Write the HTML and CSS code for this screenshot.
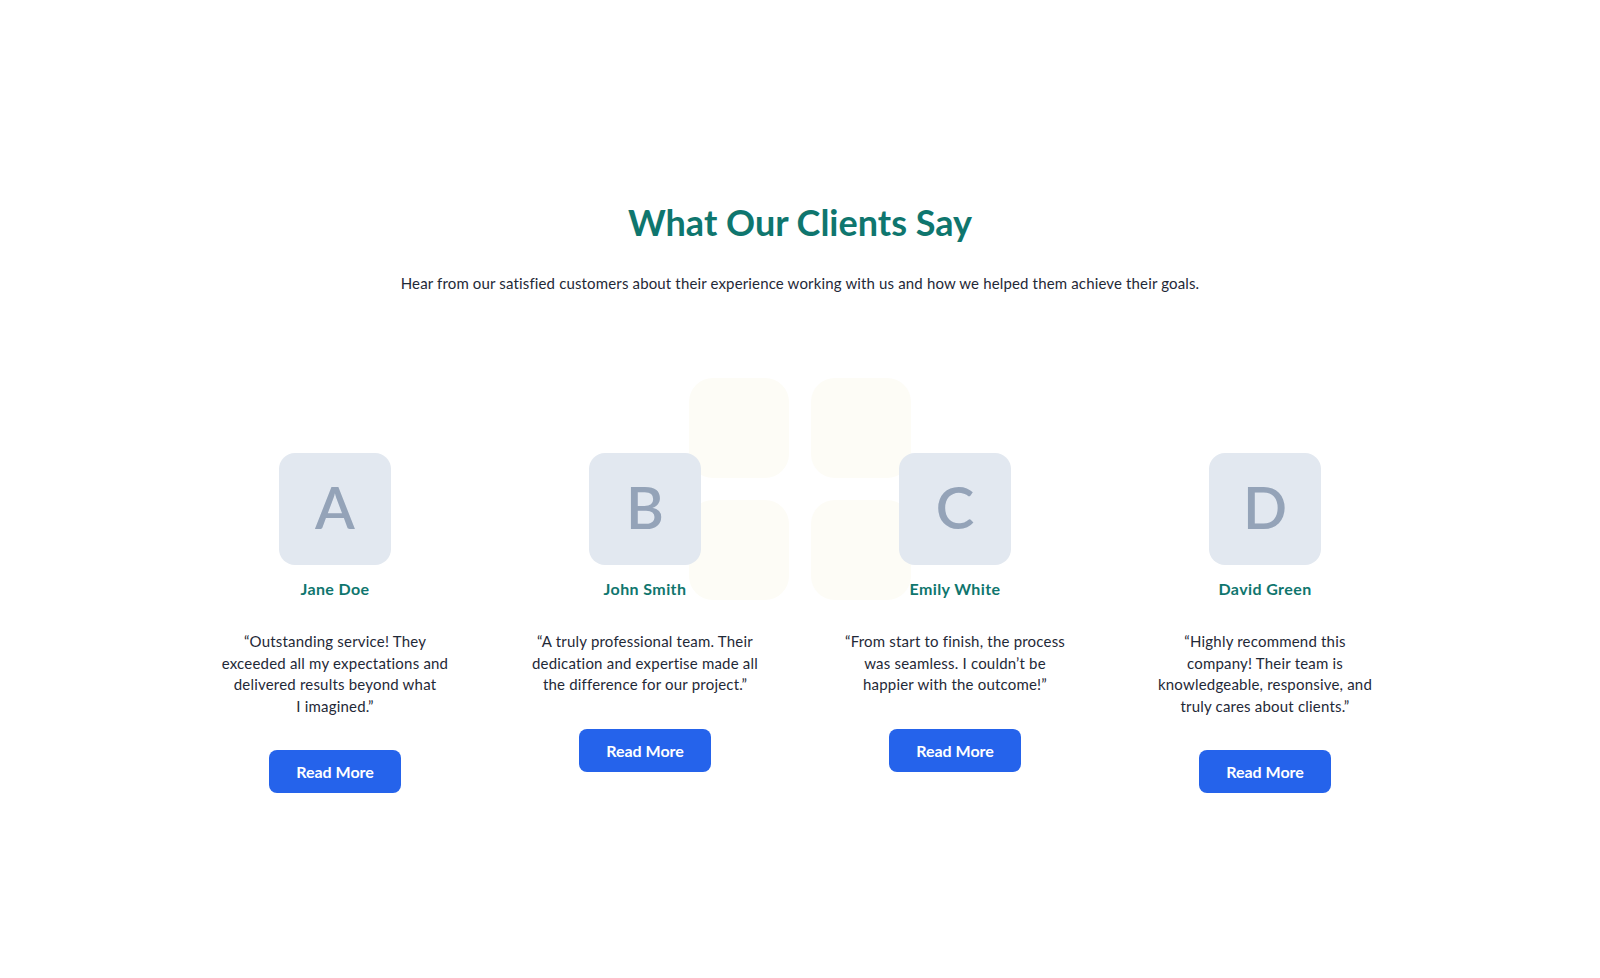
FILE: index.html
```html
<!DOCTYPE html>
<html lang="en">
<head>
    <meta charset="UTF-8">
    <meta name="viewport" content="width=device-width, initial-scale=1.0">
    <title>What Our Clients Say</title>
    <link rel="stylesheet" href="styles.css">
</head>
<body>

    <section class="testimonials">
        <h2 class="title">What Our Clients Say</h2>
        <p class="subtitle">Hear from our satisfied customers about their experience working with us and how we helped them achieve their goals.</p>

        <div class="cards">
            <div class="deco">
                <span></span><span></span><span></span><span></span>
            </div>

            <div class="card">
                <div class="avatar">A</div>
                <div class="name">Jane Doe</div>
                <p class="quote">“Outstanding service! They<br>exceeded all my expectations and<br>delivered results beyond what<br>I imagined.”</p>
                <button class="btn-more">Read More</button>
            </div>

            <div class="card">
                <div class="avatar">B</div>
                <div class="name">John Smith</div>
                <p class="quote">“A truly professional team. Their<br>dedication and expertise made all<br>the difference for our project.”</p>
                <button class="btn-more">Read More</button>
            </div>

            <div class="card">
                <div class="avatar">C</div>
                <div class="name">Emily White</div>
                <p class="quote">“From start to finish, the process<br>was seamless. I couldn’t be<br>happier with the outcome!”</p>
                <button class="btn-more">Read More</button>
            </div>

            <div class="card">
                <div class="avatar">D</div>
                <div class="name">David Green</div>
                <p class="quote">“Highly recommend this<br>company! Their team is<br>knowledgeable, responsive, and<br>truly cares about clients.”</p>
                <button class="btn-more">Read More</button>
            </div>
        </div>
    </section>

</body>
</html>
```

FILE: styles.css
```css
body {
    margin: 0;
    font-family: Lato, "Noto Sans", sans-serif;
    background: #fff;
    color: #1f2937;
}

.testimonials {
    padding: 200px 0 180px;
    text-align: center;
}

.title {
    margin: 0;
    font-size: 36px;
    line-height: 44px;
    font-weight: 700;
    color: #0f766e;
}

.subtitle {
    margin: 27px 0 0;
    font-size: 15px;
    line-height: 24px;
    letter-spacing: 0.15px;
    color: #1f2937;
}

.cards {
    position: relative;
    display: grid;
    grid-template-columns: repeat(4, 270px);
    justify-content: center;
    column-gap: 40px;
    margin-top: 158px;
}

.deco {
    position: absolute;
    top: -75px;
    left: 50%;
    transform: translateX(-50%);
    display: grid;
    grid-template-columns: repeat(2, 100px);
    grid-template-rows: repeat(2, 100px);
    gap: 22px;
    z-index: 0;
}

.deco span {
    background: #fdfcf6;
    border-radius: 24px;
}

.card {
    position: relative;
    z-index: 1;
    display: flex;
    flex-direction: column;
    align-items: center;
}

.avatar {
    width: 112px;
    height: 112px;
    box-sizing: border-box;
    padding-bottom: 5px;
    display: flex;
    align-items: center;
    justify-content: center;
    background: #e2e8f0;
    border-radius: 16px;
    font-size: 58px;
    font-weight: 600;
    color: #94a3b8;
}

.name {
    margin-top: 14px;
    font-size: 16px;
    line-height: 20px;
    font-weight: 700;
    color: #0f766e;
    letter-spacing: 0.4px;
}

.quote {
    margin: 32px 0 0;
    max-width: 260px;
    font-size: 15px;
    line-height: 21.5px;
    letter-spacing: 0.2px;
    color: #1f2937;
}

.btn-more {
    margin-top: 33px;
    height: 43px;
    padding: 0 27px;
    font-family: inherit;
    font-size: 16px;
    font-weight: 700;
    color: #fff;
    background: #2563eb;
    border: none;
    border-radius: 8px;
    cursor: pointer;
}
```
